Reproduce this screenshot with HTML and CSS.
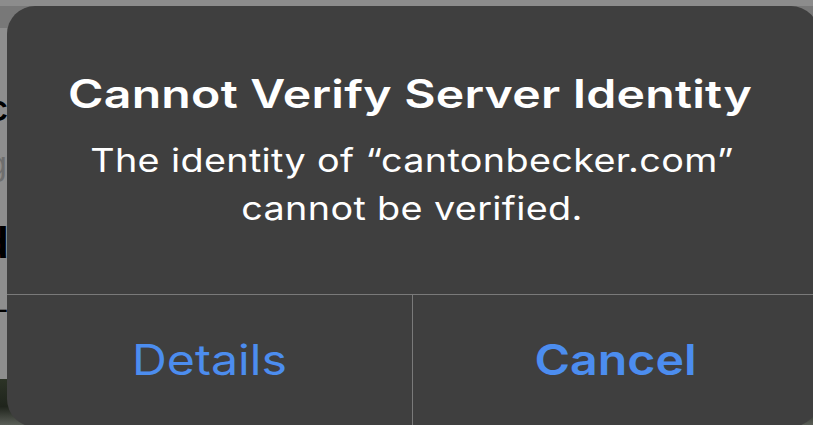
FILE: index.html
```html
<!DOCTYPE html>
<html lang="en">
<head>
<meta charset="utf-8">
<title>Cannot Verify Server Identity</title>
<link rel="stylesheet" href="styles.css">
</head>
<body>
<div class="backdrop">
  <div class="topbar"></div>
  <div class="page">
    <span class="frag frag-c">C</span>
    <span class="frag frag-g">g</span>
    <span class="frag frag-d">d</span>
    <span class="frag frag-dash">-</span>
    <div class="frag-photo"></div>
  </div>
</div>
<div class="alert" role="alertdialog">
  <div class="alert-body">
    <h1 class="alert-title">Cannot Verify Server Identity</h1>
    <p class="alert-message">The identity of “cantonbecker.com” cannot be verified.</p>
  </div>
  <div class="alert-actions">
    <button class="action"><span class="action-label">Details</span></button>
    <button class="action action-cancel"><span class="action-label">Cancel</span></button>
  </div>
</div>
</body>
</html>
```
FILE: styles.css
```css
html, body {
  margin: 0;
  padding: 0;
}
body {
  width: 813px;
  height: 425px;
  overflow: hidden;
  position: relative;
  background: #8c8c8c;
  font-family: "Inter", "Noto Sans", sans-serif;
}
.backdrop {
  display: flex;
  flex-direction: column;
  height: 100%;
}
.topbar {
  height: 22px;
  margin-top: 6px;
  background: #787878;
}
.page {
  flex: 1;
  display: flex;
  flex-direction: column;
  background: #8e8e8e;
  position: relative;
}
.frag {
  display: block;
  font-family: "Liberation Sans", sans-serif;
  line-height: 1;
  margin-left: -8px;
  color: #000;
}
.frag-c { font-size: 30px; margin-top: 68px; font-weight: bold; margin-left: -14px; }
.frag-g { font-size: 34px; margin-top: 20px; color: #6e6e6e; margin-left: -12px; }
.frag-d { font-size: 44px; margin-top: 41px; font-weight: bold; margin-left: -18px; }
.frag-dash { font-size: 30px; margin-top: 29px; margin-left: -2px; }
.frag-photo {
  margin-top: auto;
  height: 46px;
  background: linear-gradient(180deg, #2c3326 0%, #1f241c 60%, #5a5e57 100%);
}

.alert {
  position: absolute;
  left: 7px;
  top: 6px;
  width: 812px;
  height: 421px;
  border-radius: 28px;
  background: #3f3f3f;
  color: #fff;
  display: flex;
  flex-direction: column;
  overflow: hidden;
}
.alert-body {
  height: 288px;
  box-sizing: border-box;
  padding-top: 64px;
  text-align: center;
}
.alert-title {
  margin: 0 0 0 -6px;
  font-size: 39px;
  font-weight: 600;
  line-height: 48px;
  letter-spacing: 0.2px;
  transform: scaleX(1.235);
}
.alert-message {
  margin: 19px auto 0;
  width: 560px;
  font-size: 32px;
  font-weight: 400;
  line-height: 48px;
  letter-spacing: 0.3px;
  transform: translateX(-1px) scaleX(1.18);
}
.alert-actions {
  flex: 1;
  display: grid;
  grid-template-columns: 405px 1fr;
  border-top: 1px solid #7a7a7a;
}
.action {
  background: none;
  border: 0;
  margin: 0;
  padding: 0 0 4px;
  font-family: inherit;
  font-size: 42px;
  font-weight: 400;
  color: #4c8def;
  cursor: pointer;
}
.action + .action {
  border-left: 1px solid #7a7a7a;
}
.action-label {
  display: inline-block;
  transform: scaleX(1.15);
}
.action-cancel {
  font-weight: 600;
  padding-right: 0;
}
```
